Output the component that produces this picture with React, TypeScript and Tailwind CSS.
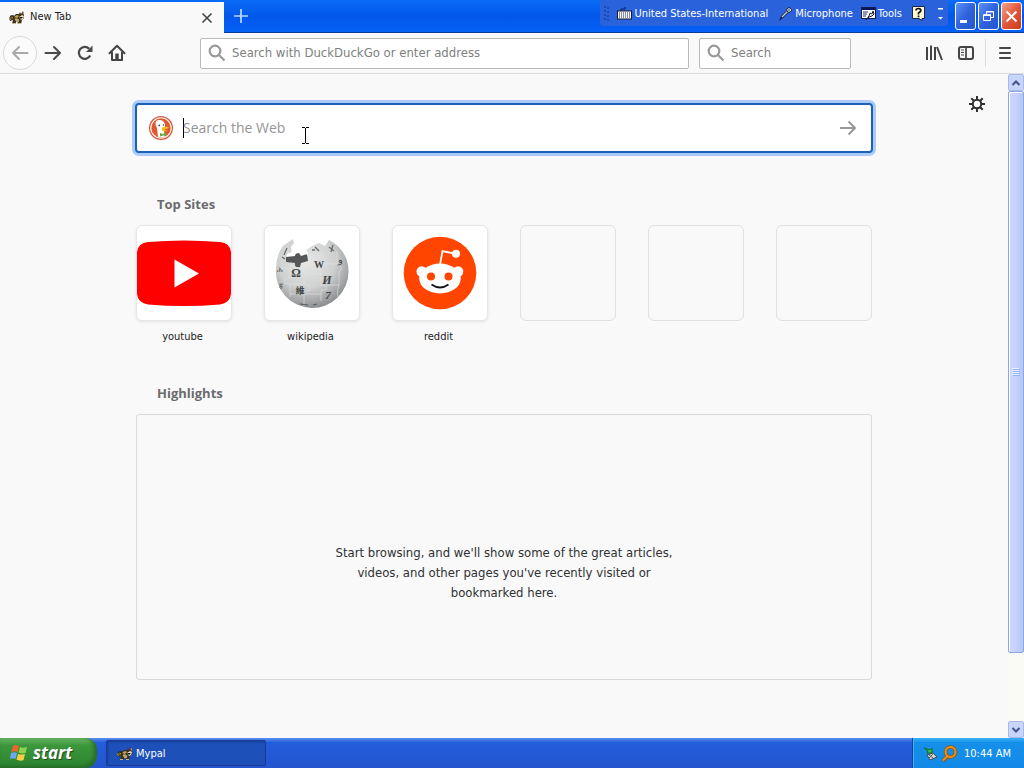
import React from 'react';

const RaccoonIcon = () => (
  <svg width="16" height="16" viewBox="0 0 16 16" aria-hidden="true" className="shrink-0">
    <path d="M0 8 L2 5 L5 6 L7 4 L10 4 L11 2 L12 4 L14 1 L15 4 L15 8 L13 10 L12 14 L9 14 L8 11 L6 14 L3 14 L4 10 L1 11 Z" fill="#3a3020" />
    <path d="M0 8 L3 6 L4 8 L1 10 Z M5 7 L8 5 L10 6 L8 8 Z" fill="#c8a54e" />
    <path d="M6 9 L9 9 L10 11 L8 12 Z M3 13.500 H6 M9 13.500 H12" fill="#b89a55" stroke="#c9b583" />
    <path d="M10 7 L13 5 L15 6 L14 9 L12 10 Z" fill="#f0dfc4" />
    <path d="M10 7 L14 7 L12 9 Z" fill="#161513" />
    <path d="M13 3 L15 2 L15 5 Z" fill="#d88758" />
    <path d="M2 6 L2 9 M4 5 L4 7" stroke="#17130a" />
  </svg>
);

const Magnifier = () => (
  <svg width="18" height="18" viewBox="0 0 18 18" fill="none" stroke="#999" strokeWidth="2.2" aria-hidden="true" className="shrink-0">
    <circle cx="7" cy="7" r="5.3" />
    <path d="M11 11 L16.5 16.5" />
  </svg>
);

const BackIcon = ({ flip = false }: { flip?: boolean }) => (
  <svg width="18" height="18" viewBox="0 0 18 18" fill="none" stroke={flip ? '#4a4a4b' : '#aaaaaa'} strokeWidth="2" strokeLinecap="round" strokeLinejoin="round" aria-hidden="true">
    {flip ? <path d="M1.5 9 H16 M10 3 L16 9 L10 15" /> : <path d="M16.5 9 H2 M8 3 L2 9 L8 15" />}
  </svg>
);

const LanguageBar = () => (
  <div className="flex h-[26px] items-center rounded-b bg-[#2a62dc] pt-px pl-1 text-[11px] leading-4 text-white">
    <svg width="5" height="18" viewBox="0 0 5 18" aria-hidden="true" className="mr-2">
      <path d="M1 1 V17 M4 2 V18" stroke="#1545a6" strokeWidth="1.5" strokeDasharray="2 2" />
    </svg>
    <button className="flex items-center gap-0.5">
      <svg width="15" height="15" viewBox="0 0 15 15" aria-hidden="true">
        <path d="M4 5 V3 H8 V1" fill="none" stroke="#101c50" />
        <rect x="0.5" y="5" width="14" height="8" fill="#f8f8f8" stroke="#141a34" />
        <path d="M2 7 H13 M2 9 H13 M2 11 H13" stroke="#111b42" strokeDasharray="1 1" />
      </svg>
      United States-International
    </button>
    <button className="ml-2.5 flex items-center gap-0.5">
      <svg width="15" height="16" viewBox="0 0 15 16" aria-hidden="true">
        <path d="M1 15 L3 10 L9 4 L11 6 L5 12 Z" fill="#15203e" />
        <path d="M4 11 L10 5" stroke="#bfc9d6" strokeWidth="1.5" />
        <path d="M8 4 L11 1 L14 4 L11 7 Z" fill="#d7dce4" stroke="#29304a" />
        <path d="M9 4 L12 4 M11 2 L11 6" stroke="#69748a" />
      </svg>
      Microphone
    </button>
    <button className="ml-2 flex items-center gap-0.5">
      <svg width="15" height="14" viewBox="0 0 15 14" aria-hidden="true">
        <rect x="0.5" y="0.5" width="14" height="11" fill="#fff" stroke="#101c50" />
        <rect x="1" y="1" width="13" height="2" fill="#09145b" />
        <path d="M2 5 H7 M2 7 H6 M2 9 H5" stroke="#24315d" />
        <path d="M5 13 L8 9 L9 6 L11 7 L12 4 L13 7 L11 9 L8 10 Z" fill="#f5f5f5" stroke="#1b1d2b" />
      </svg>
      Tools
    </button>
    <button aria-label="Help" className="ml-2.5">
      <svg width="13" height="15" viewBox="0 0 13 15" aria-hidden="true">
        <path d="M0.5 0.5 H12.5 V12.5 H10 V14.5 L7 12.5 H0.5 Z" fill="#fff9d2" stroke="#1b244b" />
        <path d="M4 4.5 Q4 2.5 6.5 2.5 Q9 2.5 8.8 4.8 Q8.5 6 6.5 7 V8.5 M6.5 9.5 V11.3" fill="none" stroke="#111" strokeWidth="1.7" />
      </svg>
    </button>
    <button aria-label="Language bar options" className="mr-1 ml-3">
      <svg width="7" height="14" viewBox="0 0 7 14" fill="#fff" aria-hidden="true">
        <rect x="1" y="1" width="5" height="1.5" />
        <path d="M1 10 H6 L3.5 12.5 Z" />
      </svg>
    </button>
  </div>
);

const WindowButtons = () => (
  <div className="mt-0.5 mr-0.5 ml-[7px] flex gap-0.5">
    <button aria-label="Minimize" className="h-7 w-[21px] rounded-[3px] border border-white bg-linear-to-br from-[#5e91f8] via-[#2f62dc] to-[#2257ce]">
      <svg width="19" height="26" viewBox="0 0 19 26" aria-hidden="true"><path d="M4 18.5 H11" stroke="#fff" strokeWidth="3" /></svg>
    </button>
    <button aria-label="Restore" className="h-7 w-[21px] rounded-[3px] border border-white bg-linear-to-br from-[#5e91f8] via-[#2f62dc] to-[#2257ce]">
      <svg width="19" height="26" viewBox="0 0 19 26" fill="none" stroke="#fff" aria-hidden="true">
        <path d="M7.5 11 V8.5 H14.5 V14.5 H12 M7 9 H15" />
        <path d="M4.5 11.5 H11.5 V17.5 H4.5 Z M4 12.5 H12" />
      </svg>
    </button>
    <button aria-label="Close" className="h-7 w-[21px] rounded-[3px] border border-white bg-linear-to-br from-[#f0a08a] via-[#e2583a] to-[#c93b18]">
      <svg width="19" height="26" viewBox="0 0 19 26" aria-hidden="true"><path d="M4.5 8.5 L14.5 18.5 M14.5 8.5 L4.5 18.5" stroke="#fff" strokeWidth="2" /></svg>
    </button>
  </div>
);

const TitleBar = () => (
  <header className="flex h-[33px] border-b border-[#0a3b9c] bg-linear-to-b from-[#0a6cf6] via-[#0357ea] to-[#0560f6]">
    <div className="mt-0.5 -mb-px flex w-56 items-center bg-[#f9f9fa] pr-2.5 pl-[9px] text-[11px] text-[#222]">
      <RaccoonIcon />
      <span className="ml-[5px] grow">New Tab</span>
      <button aria-label="Close tab">
        <svg width="14" height="14" viewBox="0 0 14 14" aria-hidden="true"><path d="M2.5 2.5 L11.5 11.5 M11.5 2.5 L2.5 11.5" stroke="#444" strokeWidth="1.6" /></svg>
      </button>
    </div>
    <button aria-label="New tab" className="flex w-[33px] items-center justify-center">
      <svg width="16" height="16" viewBox="0 0 16 16" aria-hidden="true"><path d="M8 1 V15 M1 8 H15" stroke="#b9d9ff" strokeWidth="1.7" /></svg>
    </button>
    <div className="grow" />
    <LanguageBar />
    <WindowButtons />
  </header>
);

const Toolbar = () => (
  <nav className="flex h-[41px] items-center border-b border-[#dcdcdc] bg-[#f9f9fa]">
    <button aria-label="Back" className="ml-[3px] flex size-[34px] items-center justify-center rounded-full border border-[#d9d9d9] bg-[#fbfbfb]"><BackIcon /></button>
    <button aria-label="Forward" className="ml-[7px]"><BackIcon flip /></button>
    <button aria-label="Reload" className="ml-3.5">
      <svg width="18" height="18" viewBox="0 0 18 18" aria-hidden="true">
        <path d="M14.2 11.6 A6 6 0 1 1 13.2 4.7" fill="none" stroke="#4a4a4b" strokeWidth="2.2" />
        <path d="M16.500 1.500 V8 H10 Z" fill="#4a4a4b" />
      </svg>
    </button>
    <button aria-label="Home" className="ml-3.5">
      <svg width="18" height="18" viewBox="0 0 18 18" fill="none" stroke="#444445" strokeWidth="2" strokeLinejoin="round" strokeLinecap="round" aria-hidden="true">
        <path d="M1.5 9.2 L9 1.8 L16.5 9.2" />
        <path d="M4 8.5 V16 H14 V8.5" />
        <path d="M9 9.5 V15.5" strokeWidth="3.4" strokeLinecap="butt" />
      </svg>
    </button>
    <label className="ml-[74px] flex h-[31px] min-w-0 grow items-center gap-1.5 rounded-xs border border-[#b9b9b9] bg-white pl-[7px]">
      <Magnifier />
      <input aria-label="Address" placeholder="Search with DuckDuckGo or enter address" className="min-w-0 grow text-[13px] outline-none placeholder:text-[#808080]" />
    </label>
    <label className="ml-2.5 flex h-[31px] w-[152px] shrink-0 items-center gap-1.5 rounded-xs border border-[#b9b9b9] bg-white pl-[7px]">
      <Magnifier />
      <input aria-label="Search" placeholder="Search" className="w-full min-w-0 text-[13px] outline-none placeholder:text-[#808080]" />
    </label>
    <button aria-label="Library" className="ml-[74px]">
      <svg width="18" height="18" viewBox="0 0 18 18" stroke="#444445" strokeWidth="2" aria-hidden="true">
        <path d="M2 3 V16 M6 1.500 V16 M10 3 V16 M12 3 L17 16" />
      </svg>
    </button>
    <button aria-label="Sidebars" className="ml-3.5">
      <svg width="18" height="18" viewBox="0 0 18 18" fill="none" stroke="#444445" aria-hidden="true">
        <rect x="2" y="3" width="14" height="12" rx="2" strokeWidth="2" />
        <path d="M9 3 V15" strokeWidth="1.7" />
        <path d="M4 6 H7 M4 8.5 H7 M4 11 H7" />
      </svg>
    </button>
    <div className="ml-2.5 h-7 w-px bg-[#dcdcdc]" />
    <button aria-label="Menu" className="mr-2.5 ml-2.5">
      <svg width="18" height="18" viewBox="0 0 18 18" stroke="#444445" strokeWidth="2" strokeLinecap="round" aria-hidden="true"><path d="M4 4 H14 M4 9 H14 M4 14 H14" /></svg>
    </button>
  </nav>
);

const DuckIcon = () => (
  <svg width="24" height="24" viewBox="0 0 24 24" aria-hidden="true" className="shrink-0">
    <circle cx="12" cy="12" r="12" fill="#dc5338" />
    <circle cx="12" cy="12" r="10.2" fill="#e0582c" stroke="#fff" strokeWidth="1.1" />
    <path d="M6.500 7 Q7 3.500 11 4 Q16 4.500 16 10 L15 15 L16 20.500 Q12 22.500 9 20.500 L8 12 Q6 9 6.500 7Z" fill="#fff" />
    <path d="M13 11.5 Q16 10.5 20 11 Q19 13.2 15 13.5 L19 15 Q15 16 12.8 14.3Z" fill="#f9b61a" />
    <path d="M11 17 L14 18 L17 16.500 V20 L14 19.500 L11 20.500Z" fill="#65a844" />
    <circle cx="10.2" cy="9.4" r=".9" fill="#36516f" />
    <circle cx="14.4" cy="9" r=".7" fill="#36516f" />
  </svg>
);

const YouTubeLogo = () => (
  <svg viewBox="1 1 94 94" aria-hidden="true" className="size-full">
    <path d="M12 17 Q48 14 84 17 Q94 18 95 27 Q97 48 95 69 Q94 78 84 79.500 Q48 82.500 12 79.500 Q2 78 1 69 Q-1 48 1 27 Q2 18 12 17Z" fill="#f00" />
    <path d="M38.500 34.500 L63 48.500 L38.500 62.500Z" fill="#fff" />
  </svg>
);

const WikipediaLogo = () => (
  <svg viewBox="1 1 94 94" aria-hidden="true" className="size-full">
    <defs>
      <radialGradient id="globe" cx="42%" cy="32%" r="72%">
        <stop offset="0" stopColor="#e8e8e8" /><stop offset=".55" stopColor="#cfd0d0" /><stop offset="1" stopColor="#85888a" />
      </radialGradient>
    </defs>
    <path d="M19 21 L29 14 L30 18 L27 22 L28 27 L23 29 L22 36 L33 38 L43 35 L44 28 L42 25 L48 21 L55 18 L61 21 L65 15 Q84 25 84.500 46 A36.300 36.300 0 1 1 12 44 Q12 30 19 21Z" fill="url(#globe)" />
    <path d="M22 32 L31 31 Q31 28 35 28 L37 31 L43 29 L44 36 L37 38 L36 42 Q30 43 31 38 L22 37Z" fill="#555658" />
    <path d="M14 43 H26 Q27 36 30 43 H40 Q38 50 43 49 H57 V61 Q64 59 62 65 H57 V76 M26 43 V53 Q19 52 21 59 H26 V72 M26 59 H40 V49 M40 59 Q49 60 45 66 H40 V81 M57 49 Q54 41 59 40 V28 M59 39 H73 V26 M73 39 Q81 43 75 47 V60 H62 M75 60 Q72 69 75 75 M26 69 H57 M42 29 L52 34 L59 28" fill="none" stroke="#e4e4e4" strokeWidth=".6" />
    <path d="M20 30 L23 23 M18 32 L21 34 M51 22 L55 26 M65 22 L70 26 M69 20 L67 27 M48 25 H51" stroke="#686b6d" strokeWidth="1.300" />
    <g fill="#434547" fontFamily="Liberation Serif, serif" textAnchor="middle">
      <text x="32" y="52" fontSize="12" fontWeight="bold">Ω</text>
      <text x="55" y="43" fontSize="10" fontWeight="bold">W</text>
      <text x="63" y="59" fontSize="12" fontWeight="bold" fontStyle="italic">И</text>
      <text x="36" y="69" fontSize="9" fontWeight="bold" fontFamily="Noto Sans CJK TC, sans-serif">維</text>
      <text x="64" y="74" fontSize="11" fontWeight="bold" fontStyle="italic">7</text>
      <text x="76" y="38" fontSize="10">و</text>
      <text x="16" y="47" fontSize="7">ሕ</text>
      <text x="17" y="63" fontSize="7">ह</text>
    </g>
    <path d="M36 79 L44 80 M49 80 L53 79" stroke="#585b5d" />
  </svg>
);

const RedditLogo = () => (
  <svg viewBox="1 1 94 94" aria-hidden="true" className="size-full">
    <circle cx="48" cy="48" r="36.300" fill="#ff4500" />
    <path d="M48 40 L50.500 26 L62 28.500" fill="none" stroke="#fff" strokeWidth="1.800" />
    <circle cx="64" cy="28.800" r="4" fill="#fff" />
    <circle cx="29.800" cy="46.500" r="5.300" fill="#fff" />
    <circle cx="66" cy="46.500" r="5.300" fill="#fff" />
    <ellipse cx="48" cy="53.500" rx="20.800" ry="15" fill="#fff" />
    <circle cx="39" cy="51.500" r="4" fill="#ff4500" />
    <circle cx="56.500" cy="51.500" r="4" fill="#ff4500" />
    <path d="M39.500 59.500 Q48 65.500 56.500 59.500" fill="none" stroke="#151515" strokeWidth="1.800" />
  </svg>
);

const sites = [
  { name: 'youtube', logo: <YouTubeLogo /> },
  { name: 'wikipedia', logo: <WikipediaLogo /> },
  { name: 'reddit', logo: <RedditLogo /> },
];

const Scrollbar = () => (
  <div className="flex w-4 shrink-0 flex-col bg-[#fbfbf6]">
    <button aria-label="Scroll up" className="flex h-[17px] items-center justify-center rounded-xs border border-[#a9b9ea] bg-[#c7d4fc]">
      <svg width="10" height="8" viewBox="0 0 10 8" aria-hidden="true"><path d="M1.500 6 L5 2.500 L8.500 6" fill="none" stroke="#42558b" strokeWidth="2" /></svg>
    </button>
    <div className="flex grow flex-col">
      <div className="flex h-[calc(100%-68px)] items-center justify-center rounded-xs border border-[#8fa6e5] bg-linear-to-r from-[#ccd6fd] via-[#c7d2fb] to-[#b4c6f7] shadow-[inset_1px_1px_0_white]">
        <svg width="8" height="8" viewBox="0 0 8 8" aria-hidden="true"><path d="M0 .5 H7 M0 2.500 H7 M0 4.500 H7 M0 6.500 H7" stroke="#eef4ff" /><path d="M1 1.500 H8 M1 3.500 H8 M1 5.500 H8 M1 7.500 H8" stroke="#8cb0f8" /></svg>
      </div>
    </div>
    <button aria-label="Scroll down" className="flex h-[17px] items-center justify-center rounded-xs border border-[#a9b9ea] bg-[#c7d4fc]">
      <svg width="10" height="8" viewBox="0 0 10 8" aria-hidden="true"><path d="M1.500 2 L5 5.500 L8.500 2" fill="none" stroke="#42558b" strokeWidth="2" /></svg>
    </button>
  </div>
);

const NewTabPage = () => (
  <main className="relative grow px-4 pt-[30px] pb-10">
    <button aria-label="Customize page" className="absolute top-[22px] right-[23px]">
      <svg width="16" height="16" viewBox="0 0 16 16" fill="none" stroke="#2f2f31" aria-hidden="true">
        <circle cx="8" cy="8" r="4.200" strokeWidth="2" />
        <path d="M8 0 V4 M8 12 V16 M0 8 H4 M12 8 H16 M2.300 2.300 L5 5 M11 11 L13.700 13.700 M13.700 2.300 L11 5 M5 11 L2.300 13.700" strokeWidth="2" />
      </svg>
    </button>
    <div className="mx-auto max-w-[736px]">
      <form className="relative flex h-12 items-center rounded-[3px] border border-[#1b5fb8] bg-white pr-3.5 pl-3 shadow-[0_0_0_1px_#1b5fb8,0_0_0_4px_#a9cbfb]">
        <DuckIcon />
        <span className="ml-2.5 h-5 w-px bg-black" />
        <input aria-label="Search the Web" placeholder="Search the Web" className="-ml-px min-w-0 grow font-['Open_Sans','Noto_Sans',sans-serif] text-sm leading-6 outline-none placeholder:text-[#959595]" />
        <button type="button" aria-label="Submit search">
          <svg width="18" height="16" viewBox="0 0 18 16" fill="none" stroke="#999" strokeWidth="2" aria-hidden="true"><path d="M1 8 H16 M9.500 1.500 L16 8 L9.500 14.500" /></svg>
        </button>
        <svg width="8" height="17" viewBox="0 0 8 17" fill="none" stroke="#000" aria-hidden="true" className="absolute top-[22px] left-[165px]">
          <path d="M0 .5 H3 M4 .5 H7 M3.500 1 V16 M0 16.500 H3 M4 16.500 H7" />
        </svg>
      </form>

      <h2 className="mt-[42px] pl-[21px] font-['Open_Sans','Noto_Sans',sans-serif] text-[13px] leading-5 font-bold text-[#6b6b6d]">Top Sites</h2>
      <ul className="mt-[11px] grid grid-cols-6 gap-8">
        {sites.map((site) => (
          <li key={site.name}>
            <a href={'#' + site.name} className="block text-center text-[11px] leading-4 text-[#222]">
              <span className="block aspect-square overflow-hidden rounded-md border border-[#e6e6e7] bg-white shadow-[0_1px_3px_#e2e2e2]">{site.logo}</span>
              <span className="mt-2 block pr-[3px]">{site.name}</span>
            </a>
          </li>
        ))}
        {[0, 1, 2].map((slot) => (
          <li key={slot} className="aspect-square self-start rounded-md border border-[#e1e1e2]" />
        ))}
      </ul>

      <h2 className="mt-[38px] pl-[21px] font-['Open_Sans','Noto_Sans',sans-serif] text-[13px] leading-5 font-bold text-[#6b6b6d]">Highlights</h2>
      <section className="mt-[11px] flex h-[266px] justify-center rounded-[3px] border border-[#d9d9da] pt-32">
        <p className="w-[350px] text-center text-[13px] leading-5 text-[#303032]">
          Start browsing, and we'll show some of the great articles, videos, and other pages you've recently visited or bookmarked here.
        </p>
      </section>
    </div>
  </main>
);

const Taskbar = () => (
  <footer className="flex h-[30px] bg-linear-to-b from-[#5b90f0] via-[#245ddb] via-15% to-[#2455cf] text-[11px] text-white">
    <button className="flex w-[97px] items-center gap-1 rounded-r-xl bg-linear-to-b from-[#69b663] via-[#3c963b] via-25% to-[#2c8530] pl-2.5 font-['Open_Sans','Noto_Sans',sans-serif] text-[17px] font-bold italic shadow-[inset_-3px_-2px_4px_#246b27] [text-shadow:1px_1px_1px_#1c4d20]">
      <svg width="19" height="18" viewBox="0 0 19 18" aria-hidden="true" className="shrink-0">
        <path d="M3 2 Q6 0 9 2 L7.500 8 Q4.500 6.500 1.500 8Z" fill="#ef642f" />
        <path d="M10 3 Q13 4.500 17 3 L15.500 9 Q12 10 8.500 8.500Z" fill="#8ed34c" />
        <path d="M1 9 Q4.500 7.500 7 9 L5.500 15 Q3 13.500 0 15Z" fill="#70a6f5" />
        <path d="M8 10 Q11.500 11 15 10 L13.500 16 Q10 17.500 6.500 15.500Z" fill="#fad146" />
      </svg>
      start
    </button>
    <button className="mt-0.5 mb-0.5 ml-[9px] flex w-40 items-center gap-[3px] rounded-xs border border-[#173d99] bg-[#1d50b8] pt-0.5 pl-2.5 shadow-[inset_1px_1px_2px_#163e96]">
      <RaccoonIcon />
      Mypal
    </button>
    <div className="grow" />
    <div className="flex items-center border-l border-[#103f9f] bg-linear-to-b from-[#38b3f5] via-[#1590e9] via-15% to-[#108ae6] pt-0.5 pr-[13px] pl-2.5 shadow-[inset_1px_0_0_#36b9f7]">
      <svg width="16" height="16" viewBox="0 0 16 16" aria-hidden="true">
        <path d="M1 2 L7 4 L9 2 L9 7 L4 7 L5 5Z" fill="#37c443" stroke="#176e25" />
        <path d="M4 9 L10 7 L14 11 L7 14Z" fill="#d4d8d5" stroke="#414c4c" />
        <path d="M6 9 L10 12 M10 8 L6 12" stroke="#536264" />
      </svg>
      <svg width="17" height="18" viewBox="0 0 17 18" fill="none" aria-hidden="true" className="ml-0.5">
        <path d="M6.500 11 L2 16" stroke="#8e500b" strokeWidth="3.500" />
        <circle cx="9.500" cy="7" r="5" stroke="#8e500b" strokeWidth="3.500" />
        <path d="M6.500 11 L2 15.500" stroke="#f09318" strokeWidth="2" />
        <circle cx="9.500" cy="7" r="5" stroke="#f09318" strokeWidth="2" />
      </svg>
      <time className="ml-1.5">10:44 AM</time>
    </div>
  </footer>
);

export default function App() {
  return (
    <div className="flex min-h-screen flex-col bg-[#f9f9fa] font-['DejaVu_Sans_Condensed','Open_Sans',sans-serif]">
      <TitleBar />
      <Toolbar />
      <div className="flex grow">
        <NewTabPage />
        <Scrollbar />
      </div>
      <Taskbar />
    </div>
  );
}
